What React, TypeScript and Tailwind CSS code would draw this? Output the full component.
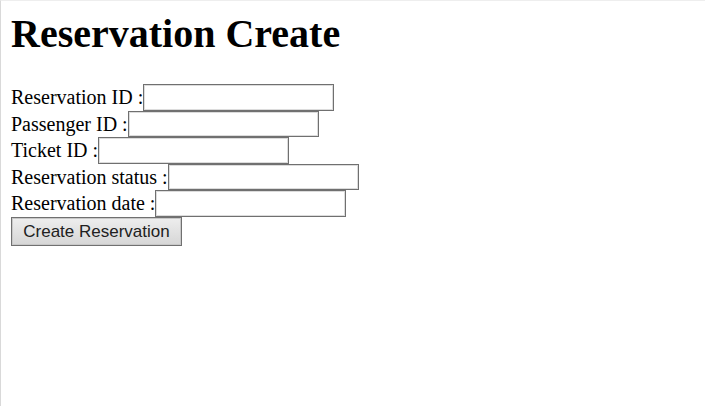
const fields = [
  { id: 'reservation-id', label: 'Reservation ID :' },
  { id: 'passenger-id', label: 'Passenger ID :' },
  { id: 'ticket-id', label: 'Ticket ID :' },
  { id: 'reservation-status', label: 'Reservation status :' },
  { id: 'reservation-date', label: 'Reservation date :' },
];

export default function App() {
  return (
    <main className="min-h-screen border-t border-l border-t-[#eeeeee] border-l-[#d9d9d9] bg-white px-[10px] pt-[9px] font-['Liberation_Serif',serif] text-black">
      <h1 className="mb-[26px] text-[40px] leading-[48px] font-bold">Reservation Create</h1>
      <form onSubmit={(event) => event.preventDefault()}>
        <div className="grid min-h-[133px] grid-rows-5">
          {fields.map((field) => (
            <div key={field.id} className="flex">
              <label htmlFor={field.id} className="text-[20px] leading-[26px] whitespace-nowrap">
                {field.label}
              </label>
              <input
                id={field.id}
                name={field.id}
                type="text"
                className="w-[191px] border border-[#707070] bg-white px-1 font-['Liberation_Sans',sans-serif] text-[16px] leading-[20px] inset-shadow-[0_0_0_1px_#dcdcdc]"
              />
            </div>
          ))}
        </div>
        <button
          type="submit"
          className="block h-[29px] w-[171px] border border-[#707070] bg-linear-to-b from-[#eeeeee] to-[#d6d6d6] font-['Liberation_Sans',sans-serif] text-[17px] leading-[26px] text-[#202020] inset-shadow-[0_0_0_1px_#c8c8c8]"
        >
          Create Reservation
        </button>
      </form>
    </main>
  );
}
